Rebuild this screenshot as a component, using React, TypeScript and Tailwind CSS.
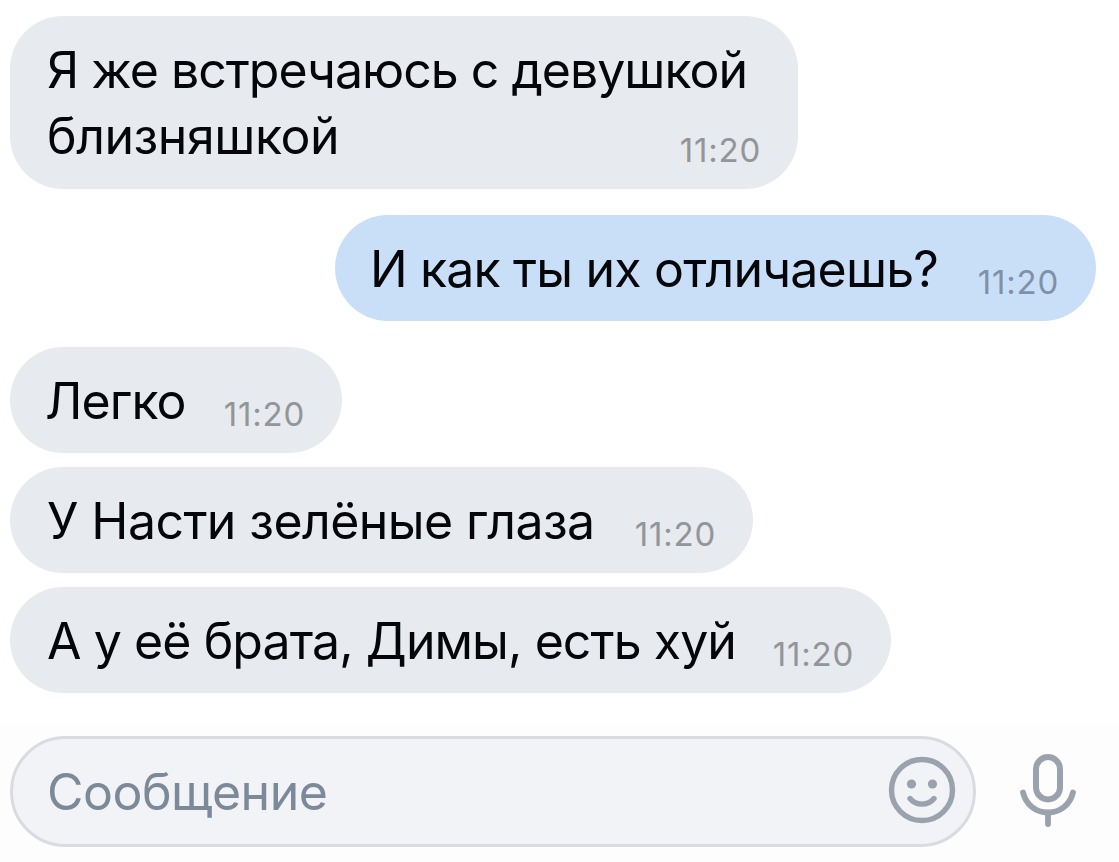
import React from 'react';

export default function App() {
  return (
    <div className="w-full h-[862px] bg-white font-['Inter','Liberation_Sans',sans-serif] text-[#05060a] overflow-hidden flex flex-col">
      {/* MESSAGES */}
      <div className="h-[724px] pt-4 pl-[10px] pr-[23px] flex flex-col items-start">
        <Message size="w-[788px] h-[173px] pl-[37px]">
          <span className="block tracking-[-0.99px]">Я же встречаюсь с девушкой</span>
          <span className="block tracking-[-0.45px]">близняшкой</span>
        </Message>
        <Message size="w-[761px] h-[106px] mt-[26px] pl-[35px] tracking-[-0.83px]" own>И как ты их отличаешь?</Message>
        <Message size="w-[332px] h-[106px] mt-[26px] pl-[35px] tracking-[-0.9px]">Легко</Message>
        <Message size="w-[743px] h-[106px] mt-[14px] pl-[37px] tracking-[-0.58px]">У Насти зелёные глаза</Message>
        <Message size="w-[881px] h-[106px] mt-[14px] pl-[37px] tracking-[-0.92px]">А у её брата, Димы, есть хуй</Message>
      </div>

      {/* INPUT BAR */}
      <div className="h-[138px] bg-[#fdfdfe] pt-3 pl-[10px] flex items-start">
        <div className="w-[966px] h-[111px] rounded-full border-3 border-[#dadbe2] bg-[#f1f3f6] pl-[34px] pr-[17px] flex items-center justify-between">
          <span className="text-[50px] leading-[66px] tracking-[-0.5px] text-[#7b8998]">Сообщение</span>
          <svg className="w-[68px] h-[68px] -mt-1" viewBox="0 0 68 68" fill="none">
            <circle cx="34" cy="34" r="30.5" stroke="#99a2ad" strokeWidth="5.4" />
            <circle cx="23.5" cy="28" r="4.6" fill="#99a2ad" />
            <circle cx="44.5" cy="28" r="4.6" fill="#99a2ad" />
            <path d="M22 42.5C28 50 40 50 46 42.5" stroke="#99a2ad" strokeWidth="5.4" strokeLinecap="round" />
          </svg>
        </div>
        <svg className="w-[60px] h-[76px] ml-[42px] mt-[17px]" viewBox="0 0 60 76" fill="none" stroke="#99a2ad" strokeLinecap="round">
          <rect x="18" y="4" width="24" height="42.5" rx="12" strokeWidth="6" />
          <path d="M5 39.5C8 51.5 17.5 59.5 30 59.5S52 51.5 55 39.5M30 60V71" strokeWidth="5.8" />
        </svg>
      </div>
    </div>
  );
}

function Message({ children, size, own }: { children: React.ReactNode, size: string, own?: boolean }) {
  return (
    <div className={`${size} ${own ? 'bg-[#c9dff8] self-end' : 'bg-[#e7eaee]'} rounded-[53px] pr-[37px] pt-[21px] pb-[19px] grid shrink-0`}>
      <div className="col-start-1 row-start-1 text-[50px] leading-[66px] whitespace-nowrap">{children}</div>
      {/* time shares the text's cell, so it sits beside a short last line */}
      <span className={`col-start-1 row-start-1 justify-self-end self-end text-[33px] leading-10 tracking-[0.8px] ${own ? 'text-[#7f91a9]' : 'text-[#929599]'}`}>11:20</span>
    </div>
  );
}
